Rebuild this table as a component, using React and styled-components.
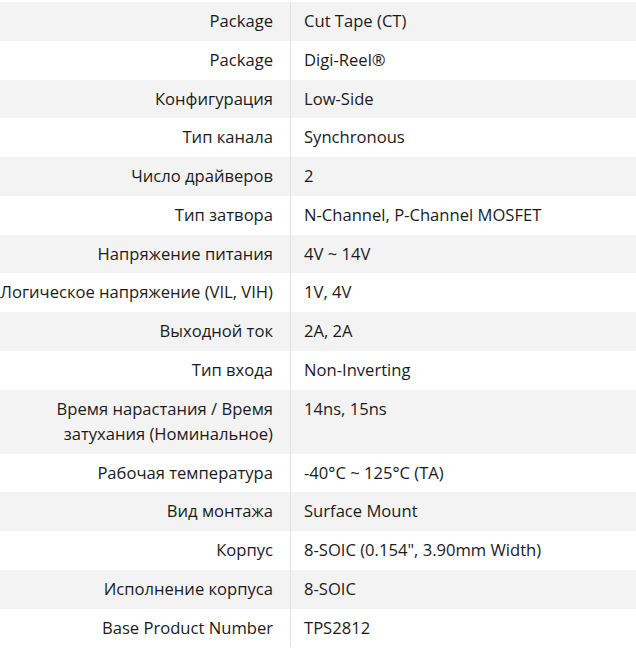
import React from 'react';
import styled, { createGlobalStyle } from 'styled-components';

const GlobalStyle = createGlobalStyle`
  html, body {
    margin: 0;
    padding: 0;
    background: #fff;
    overflow: hidden;
  }
  body {
    font-family: "Open Sans", Roboto, sans-serif;
    color: #1b1b1b;
  }
`;

const Page = styled.div`
  width: 636px;
  padding-top: 2px;
  overflow: hidden;
`;

const Table = styled.div`
  display: flex;
  flex-direction: column;
  margin-left: -33px;
`;

const Row = styled.div`
  display: flex;
  align-items: stretch;
  background: ${({ striped }) => (striped ? '#f3f3f3' : '#fff')};
`;

const Label = styled.div`
  flex: 0 0 324px;
  box-sizing: border-box;
  padding: 6px 17px 7.5px 15px;
  border-right: 1px solid #e2e2e2;
  text-align: right;
  font-size: 16.6px;
  line-height: 25.25px;
`;

const Value = styled.div`
  flex: 1;
  padding: 6px 13px 7.5px;
  font-size: 16.6px;
  line-height: 25.25px;
`;

const specs = [
  ['Package', 'Cut Tape (CT)'],
  ['Package', 'Digi-Reel®'],
  ['Конфигурация', 'Low-Side'],
  ['Тип канала', 'Synchronous'],
  ['Число драйверов', '2'],
  ['Тип затвора', 'N-Channel, P-Channel MOSFET'],
  ['Напряжение питания', '4V ~ 14V'],
  ['Логическое напряжение (VIL, VIH)', '1V, 4V'],
  ['Выходной ток', '2A, 2A'],
  ['Тип входа', 'Non-Inverting'],
  ['Время нарастания / Время затухания (Номинальное)', '14ns, 15ns'],
  ['Рабочая температура', '-40°C ~ 125°C (TA)'],
  ['Вид монтажа', 'Surface Mount'],
  ['Корпус', '8-SOIC (0.154", 3.90mm Width)'],
  ['Исполнение корпуса', '8-SOIC'],
  ['Base Product Number', 'TPS2812'],
];

const App = () => (
  <Page>
    <GlobalStyle />
    <Table>
      {specs.map(([label, value], idx) => (
        <Row key={idx} striped={idx % 2 === 0}>
          <Label>{label}</Label>
          <Value>{value}</Value>
        </Row>
      ))}
    </Table>
  </Page>
);

export default App;
